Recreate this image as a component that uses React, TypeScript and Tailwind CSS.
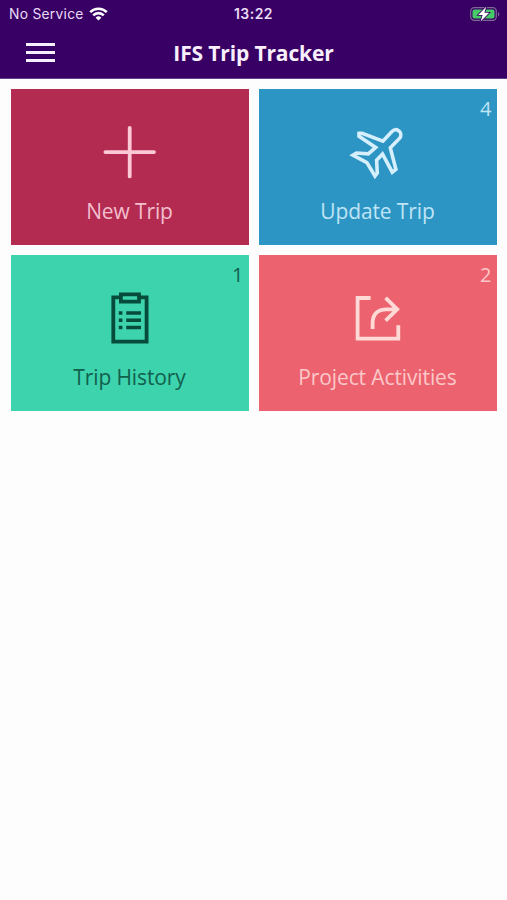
import type { ReactNode } from "react";

type TileProps = {
  label: string;
  count?: number;
  colors: string;
  iconColor: string;
  children: ReactNode;
};

function Tile({ label, count, colors, iconColor, children }: TileProps) {
  return (
    <button className={`relative flex h-[156px] flex-col items-center pt-[33px] ${colors}`}>
      {count !== undefined && (
        <span className="absolute right-[5px] top-[6px] text-[20px] leading-7">{count}</span>
      )}
      <svg
        className={iconColor}
        width="60"
        height="60"
        viewBox="0.3 0 60 60"
        fill="none"
        stroke="currentColor"
        strokeWidth="3.8"
      >
        {children}
      </svg>
      <span className="mt-[15px] whitespace-nowrap text-[21px] leading-7 tracking-[-0.12px]">{label}</span>
    </button>
  );
}

function StatusBar() {
  return (
    <div className="grid h-[27px] grid-cols-3 items-center font-['Inter','Liberation_Sans',sans-serif] text-[#e8dbf5]">
      <div className="flex items-center gap-[5px] pl-[9px]">
        <span className="whitespace-nowrap text-[13.8px] leading-4 tracking-[0.28px]">No Service</span>
        <svg width="19" height="14" viewBox="0 0 19 14" fill="none" stroke="#fff" strokeWidth="2.6">
          <path d="M1.2 5.1a11.8 11.8 0 0 1 16.6 0" />
          <path d="M4.2 8.3a7.5 7.5 0 0 1 10.6 0" />
          <path d="M9.5 13.6 6.6 10.7a4.2 4.2 0 0 1 5.8 0Z" fill="#fff" stroke="none" />
        </svg>
      </div>
      <span className="text-center text-[14px] font-semibold leading-4 tracking-[0.45px]">13:22</span>
      <div className="flex justify-end pr-[6px]">
        <svg width="31" height="16" viewBox="0 0 31 16">
          <rect x="0.7" y="1.7" width="25.6" height="12.6" rx="3.6" fill="none" stroke="#806796" strokeWidth="1.2" />
          <rect x="2.5" y="3.5" width="22" height="9" rx="2" fill="#46cb68" />
          <path d="M28 6v4.4c1.8-.8 1.8-3.6 0-4.4Z" fill="#806796" />
          <path
            d="M16.2.8 8.2 9h4.4L10.6 15.4l8.6-8.7h-4.8Z"
            fill="#fff"
            stroke="#380064"
            strokeWidth="1.6"
            paintOrder="stroke"
          />
        </svg>
      </div>
    </div>
  );
}

export default function App() {
  return (
    <div className="min-h-[900px] w-full bg-[#fdfdfd] font-['Open_Sans','Noto_Sans',sans-serif]">
      <header className="h-[79px] border-b border-[#64408a] bg-[#380064]">
        <StatusBar />
        <div className="grid h-[51px] grid-cols-[90px_1fr_90px] items-center">
          <button className="ml-[26px] flex w-[29px] flex-col gap-[5px]" aria-label="Menu">
            <span className="h-[3px] w-full bg-[#f7effb]" />
            <span className="h-[3px] w-full bg-[#f7effb]" />
            <span className="h-[3px] w-full bg-[#f7effb]" />
          </button>
          <h1 className="text-center text-[21px] font-bold leading-7 tracking-[-0.14px] text-[#f8effc]">
            IFS Trip Tracker
          </h1>
        </div>
      </header>
      <main className="grid grid-cols-2 gap-[10px] px-[10.5px] pt-[10px]">
        <Tile label="New Trip" colors="bg-[#b42b52] text-[#f2bfcc]" iconColor="text-[#fac9d5]">
          <path d="M30 5.8v48.6M5.7 30.1h48.6" strokeLinecap="round" />
        </Tile>
        <Tile label="Update Trip" count={4} colors="bg-[#2d95c3] text-[#bfe4f5]" iconColor="text-[#d6effc]">
          <path
            d="M11.3 11.4 14.6 11.2 35.2 19.2 44 9.7C49.3 4.8 55.8 10.6 52 16.2L42.6 25.8 48.2 47.4 44.6 50.2 34.8 32 28.9 38.2 29.6 51 27.3 54 19.2 40.6 5.2 33.2 8.8 31 20.6 31.9 28 25.4 11.3 14.2Z"
            strokeWidth="3.6"
          />
        </Tile>
        <Tile label="Trip History" count={1} colors="bg-[#3dd3ad] text-[#11604c]" iconColor="text-[#074c3b]">
          <path d="M21 9.4h-7.4v44.2h33.3V9.4h-7.4M21.2 6.4h18.1v7.2H21.2Z" />
          <path d="M19.1 25h3.6M19.1 32.2h3.6M19.1 39.6h3.6M26.5 25h14.8M26.5 32.2h14.8M26.5 39.6h14.8" strokeWidth="3.5" />
        </Tile>
        <Tile label="Project Activities" count={2} colors="bg-[#ec626f] text-[#fbc8c9]" iconColor="text-[#ffd9d6]">
          <path d="M22.9 10h-13v40.7h40.7V37.3" />
          <path d="M24.9 41v-5.7c0-9 5-14 14-14h11M37.9 9.9l11.6 11.4-11.6 11.4" />
        </Tile>
      </main>
    </div>
  );
}
